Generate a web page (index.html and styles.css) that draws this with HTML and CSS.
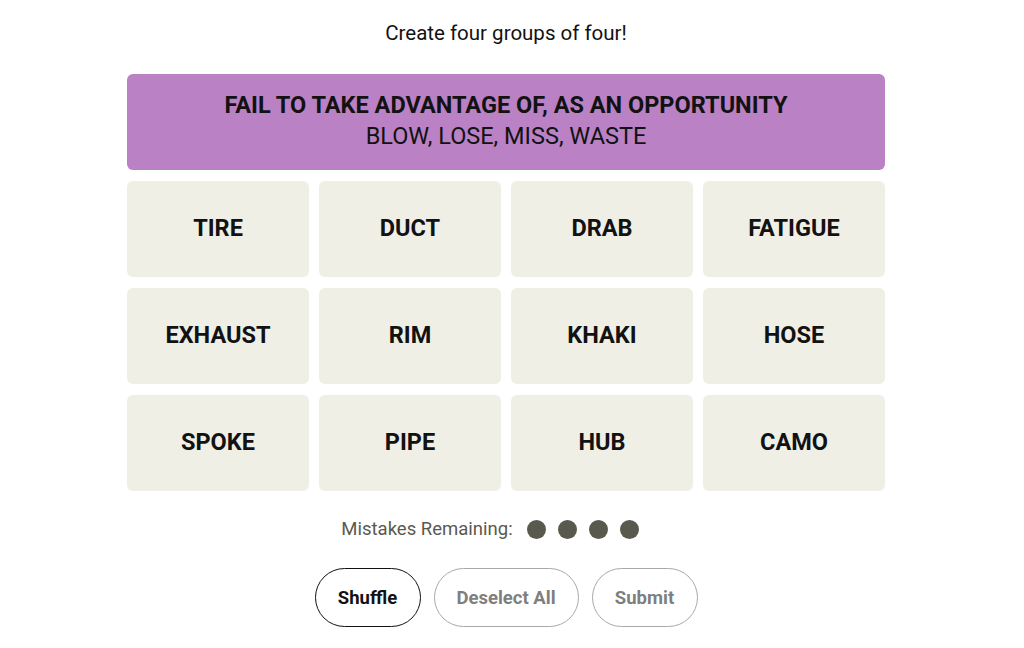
FILE: index.html
```html
<!DOCTYPE html>
<html>
	<head>
		<meta charset="UTF-8">
		<title>Connections</title>
		<link rel="stylesheet" href="styles.css">
	</head>
	<body>
		<div class="game">
			<p class="intro">Create four groups of four!</p>
			<div class="board">
				<div class="solved">
					<h3>FAIL TO TAKE ADVANTAGE OF, AS AN OPPORTUNITY</h3>
					<p>BLOW, LOSE, MISS, WASTE</p>
				</div>
				<div class="tiles">
					<div class="tile">TIRE</div>
					<div class="tile">DUCT</div>
					<div class="tile">DRAB</div>
					<div class="tile">FATIGUE</div>
					<div class="tile">EXHAUST</div>
					<div class="tile">RIM</div>
					<div class="tile">KHAKI</div>
					<div class="tile">HOSE</div>
					<div class="tile">SPOKE</div>
					<div class="tile">PIPE</div>
					<div class="tile">HUB</div>
					<div class="tile">CAMO</div>
				</div>
			</div>
			<div class="mistakes">
				<span class="label">Mistakes Remaining:</span>
				<span class="dot"></span>
				<span class="dot"></span>
				<span class="dot"></span>
				<span class="dot"></span>
			</div>
			<div class="actions">
				<button class="btn btn-on">Shuffle</button>
				<button class="btn btn-deselect">Deselect All</button>
				<button class="btn btn-submit">Submit</button>
			</div>
		</div>
	</body>
</html>
```
FILE: styles.css
```css
* {
	margin: 0;
	padding: 0;
	box-sizing: border-box;
}

body {
	background: #fff;
	font-family: Roboto, "Liberation Sans", sans-serif;
	color: #121212;
	padding-right: 12px;
}

.game {
	width: 758px;
	margin: 0 auto;
	padding-top: 20px;
	display: flex;
	flex-direction: column;
	align-items: center;
}

.intro {
	font-size: 20.5px;
	line-height: 26px;
	margin-bottom: 28px;
}

.board {
	width: 100%;
	display: flex;
	flex-direction: column;
	gap: 11px;
}

.solved {
	height: 96px;
	background: #ba81c5;
	border-radius: 6px;
	display: flex;
	flex-direction: column;
	align-items: center;
	justify-content: center;
	padding-bottom: 2px;
}

.solved h3 {
	font-size: 23.5px;
	font-weight: 700;
	line-height: 31px;
}

.solved p {
	font-size: 23.5px;
	line-height: 31px;
}

.tiles {
	display: grid;
	grid-template-columns: repeat(4, 182px);
	grid-auto-rows: 96px;
	column-gap: 10px;
	row-gap: 11px;
}

.tile {
	background: #efefe6;
	border-radius: 6px;
	display: flex;
	align-items: center;
	justify-content: center;
	font-size: 23.5px;
	font-weight: 700;
	padding-bottom: 2px;
}

.mistakes {
	margin-top: 27px;
	margin-right: 32px;
	display: flex;
	align-items: center;
	gap: 12px;
	font-size: 18.5px;
	color: #5a594e;
}

.label {
	margin-right: 2px;
}

.dot {
	width: 19px;
	height: 19px;
	border-radius: 50%;
	background: #5a594e;
}

.actions {
	margin-top: 28px;
	display: flex;
	gap: 13px;
}

.btn {
	height: 59px;
	border-radius: 30px;
	border: 1px solid #121212;
	background: #fff;
	font-family: Roboto, "Liberation Sans", sans-serif;
	font-size: 18.5px;
	font-weight: 700;
	color: #121212;
}

.btn-on {
	width: 106px;
}

.btn-deselect {
	width: 145px;
	border-color: #a9a9a9;
	color: #7f7f7f;
}

.btn-submit {
	width: 106px;
	border-color: #a9a9a9;
	color: #7f7f7f;
}
```
